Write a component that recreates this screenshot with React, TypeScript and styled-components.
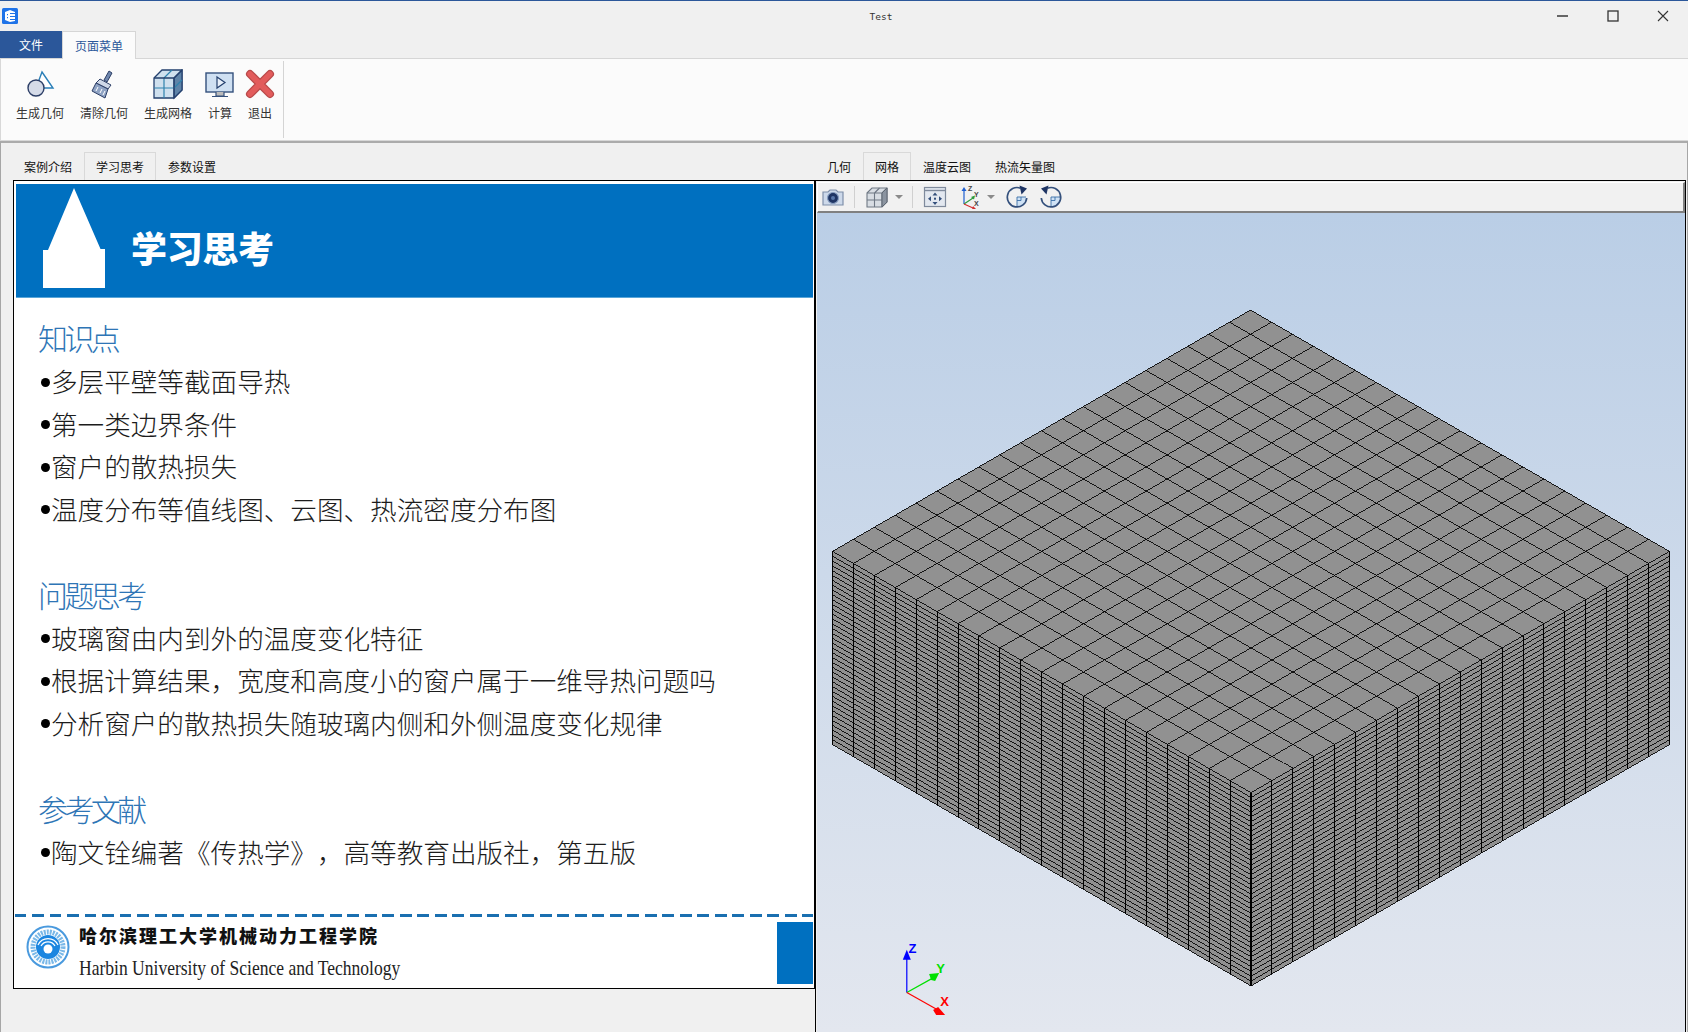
import React from "react";
import styled, { createGlobalStyle } from "styled-components";

const UI = `"Noto Sans CJK SC", "Liberation Sans", sans-serif`;

const Global = createGlobalStyle`
  html, body { margin: 0; padding: 0; background: #f0f0f0; overflow: hidden; }
  * { box-sizing: border-box; }
  #root { width: 1688px; height: 1032px; }
`;

const Page = styled.div`
  width: 1688px;
  height: 1032px;
  display: flex;
  flex-direction: column;
  font-family: ${UI};
  font-size: 12px;
  color: #222;
  background: #f0f0f0;
`;

const TitleBar = styled.header`
  height: 31px;
  flex: none;
  display: flex;
  align-items: center;
  border-top: 1px solid #2b579a;
  padding-bottom: 1px;
`;
const AppIcon = styled.svg`
  width: 16px;
  height: 16px;
  margin-left: 2px;
  margin-right: 2px;
  flex: none;
`;
const Title = styled.div`
  flex: 1;
  text-align: center;
  padding: 2px 0 0 204px;
  font-family: "DejaVu Sans Mono", monospace;
  font-size: 9.5px;
  color: #333;
`;
const WinButton = styled.div`
  width: 50px;
  height: 30px;
  display: flex;
  align-items: center;
  justify-content: center;
`;

const RibbonTabs = styled.nav`
  height: 27px;
  flex: none;
  display: flex;
`;
const FileTab = styled.div`
  width: 62px;
  background: #2b579a;
  color: #fff;
  display: flex;
  align-items: center;
  justify-content: center;
`;
const MenuTab = styled.div`
  width: 74px;
  background: #fbfbfb;
  color: #2b579a;
  border: 1px solid #d6d6d6;
  border-bottom: none;
  display: flex;
  align-items: center;
  justify-content: center;
  height: 28px;
  position: relative;
  z-index: 1;
`;

const Ribbon = styled.section`
  height: 83px;
  flex: none;
  background: #fbfbfb;
  border-top: 1px solid #d6d6d6;
  border-bottom: 1px solid #d8d8d8;
  border-left: 1px solid #d8d8d8;
  display: flex;
  padding: 2px 0 2px 7px;
`;
const RibbonGroup = styled.div`
  width: 276px;
  border-right: 1px solid #d4d4d4;
  display: flex;
  align-items: flex-start;
`;
const RibbonItem = styled.div`
  padding: 8px 8px 0;
  display: flex;
  flex-direction: column;
  align-items: center;
  gap: 3px;
  color: #333;
  line-height: 17px;
  white-space: nowrap;
`;
const RibbonIcon = styled.svg`
  width: 32px;
  height: 32px;
  margin: 0 -4px;
  display: block;
`;

const Workspace = styled.main`
  flex: 1;
  min-height: 0;
  display: grid;
  grid-template-columns: 814px 1fr;
  border-top: 2px solid #ababab;
  border-left: 1px solid #a6a6a6;
  border-right: 1px solid #a6a6a6;
  padding-top: 9px;
`;
const LeftColumn = styled.div`
  padding-left: 12px;
  display: flex;
  flex-direction: column;
`;
const RightColumn = styled.div`
  display: flex;
  flex-direction: column;
  min-height: 0;
`;
const TabRow = styled.div<{ $inset?: number }>`
  height: 28px;
  flex: none;
  display: flex;
  margin-left: ${(p) => p.$inset ?? 0}px;
`;
const Tab = styled.div<{ $active?: boolean }>`
  padding: 0 11px 1px;
  display: flex;
  align-items: center;
  color: #111;
  white-space: nowrap;
  border: 1px solid ${(p) => (p.$active ? "#d9d9d9" : "transparent")};
  border-bottom: none;
`;

const SlideFrame = styled.div`
  width: 802px;
  height: 809px;
  border: 1px solid #000;
  background: #fff;
  padding: 3px 1px 4px 2px;
`;
const Slide = styled.article`
  height: 100%;
  display: flex;
  flex-direction: column;
`;
const SlideHeader = styled.div`
  height: 114px;
  flex: none;
  background: #0070c0;
  border-bottom: 1px solid #5aa6d8;
  display: flex;
  align-items: center;
`;
const House = styled.svg`
  width: 62px;
  height: 100px;
  margin: -5px 0 0 27px;
  flex: none;
`;
const SlideTitle = styled.h1`
  margin: 13px 0 0 26px;
  font-size: 36px;
  line-height: 44px;
  font-weight: 900;
  color: #fff;
  letter-spacing: -0.3px;
`;
const SlideBody = styled.div`
  flex: 1;
  padding: 19px 0 0 23px;
  display: flex;
  flex-direction: column;
  gap: 44px;
`;
const Block = styled.section``;
const BlockHeading = styled.h2`
  margin: 0 0 0 -1px;
  padding-bottom: 2px;
  font-size: 30px;
  letter-spacing: -3.6px;
  line-height: 40.5px;
  font-weight: 300;
  color: #2e75b6;
`;
const Bullets = styled.ul`
  margin: 0;
  padding: 0;
  list-style: none;
`;
const Bullet = styled.li`
  display: flex;
  align-items: center;
  height: 42.5px;
  font-size: 26.6px;
  font-weight: 300;
  color: #1c1c1c;
  white-space: nowrap;
  text-spacing-trim: space-all;
  &::before {
    content: "";
    width: 9px;
    height: 9px;
    border-radius: 50%;
    background: #000;
    margin: 3px 1px 0 2px;
    flex: none;
  }
`;
const SlideFooter = styled.footer`
  height: 70px;
  flex: none;
  display: flex;
  align-items: flex-start;
  position: relative;
  padding-top: 8px;
  margin-left: -1px;
  background: repeating-linear-gradient(90deg, #1a6fb0 0 11.5px, transparent 11.5px 17.5px) top left / 100% 3px no-repeat;
`;
const Logo = styled.svg`
  width: 44px;
  height: 44px;
  margin: 3px 0 0 11px;
  flex: none;
`;
const FooterText = styled.div`
  margin-left: 9px;
  flex: 1;
  white-space: nowrap;
`;
const SchoolName = styled.div`
  font-size: 18px;
  font-weight: 900;
  line-height: 26px;
  letter-spacing: 2px;
  color: #111;
`;
const SchoolEnglish = styled.div`
  font-family: "Liberation Serif", serif;
  font-size: 21px;
  line-height: 28px;
  margin-top: 6px;
  color: #222;
  transform: scaleX(0.835);
  transform-origin: left center;
`;
const FooterBox = styled.div`
  width: 36px;
  height: 62px;
  flex: none;
  background: #0070c0;
`;

const ViewFrame = styled.div`
  flex: 1;
  min-height: 0;
  border: 1px solid #000;
  border-bottom: none;
  margin-right: 1px;
  padding: 1px 0 0 1px;
  display: flex;
  flex-direction: column;
`;
const Toolbar = styled.div`
  height: 31px;
  flex: none;
  display: flex;
  align-items: center;
  background: #f1f1f1;
  border-top: 1px solid #fff;
  border-left: 1px solid #fff;
  border-right: 2px solid #808080;
  border-bottom: 2px solid #808080;
  padding-left: 3px;
`;
const ToolIcon = styled.svg<{ $gap?: number }>`
  width: 24px;
  height: 24px;
  flex: none;
  display: block;
  margin-left: ${(p) => p.$gap ?? 0}px;
`;
const ToolSep = styled.div`
  width: 1px;
  height: 22px;
  background: #d0d0d0;
  margin: 0 10px 0 9px;
  flex: none;
`;
const Caret = styled.div<{ $gap?: number }>`
  width: 0;
  height: 0;
  border-left: 4px solid transparent;
  border-right: 4px solid transparent;
  border-top: 4px solid #8a8a8a;
  margin-left: ${(p) => p.$gap ?? 6}px;
  flex: none;
`;
const Viewport = styled.div`
  flex: 1;
  min-height: 0;
  position: relative;
  background: linear-gradient(180deg, #bacee6 0%, #e3e7ef 100%);
`;
const Scene = styled.svg`
  position: absolute;
  inset: 0;
  width: 100%;
  height: 100%;
  display: block;
`;
const AxisLabel = styled.text`
  font-family: "Liberation Sans", sans-serif;
  font-size: 13px;
  font-weight: 700;
`;
const AxisMini = styled.text`
  font-family: "Liberation Sans", sans-serif;
  font-size: 7px;
  font-weight: 700;
  fill: #444;
`;

const T = { x: 1250, y: 310 };
const L = { x: 832.5, y: 551 };
const F = { x: 1250.5, y: 792 };
const R = { x: 1668.5, y: 551 };
const H = 193;
const N = 20;
const LAYERS = 40;
type Pt = { x: number; y: number };
const lerp = (a: Pt, b: Pt, t: number): Pt => ({
  x: a.x + (b.x - a.x) * t,
  y: a.y + (b.y - a.y) * t,
});
const seg = (a: Pt, b: Pt) => `M${a.x.toFixed(1)} ${a.y.toFixed(1)}L${b.x.toFixed(1)} ${b.y.toFixed(1)}`;

function MeshLines() {
  const diagonals: string[] = [];
  const verticals: string[] = [];
  for (let i = 0; i <= N; i++) {
    const t = i / N;
    diagonals.push(seg(lerp(T, L, t), lerp(R, F, t)));
    diagonals.push(seg(lerp(T, R, t), lerp(L, F, t)));
    const a = lerp(L, F, t);
    verticals.push(seg(a, { x: a.x, y: a.y + H }));
    const b = lerp(R, F, t);
    verticals.push(seg(b, { x: b.x, y: b.y + H }));
  }
  for (let k = 1; k <= LAYERS; k++) {
    const d = (H * k) / LAYERS;
    diagonals.push(seg({ x: L.x, y: L.y + d }, { x: F.x, y: F.y + d }));
    diagonals.push(seg({ x: R.x, y: R.y + d }, { x: F.x, y: F.y + d }));
  }
  return (
    <>
      <path d={diagonals.join("")} fill="none" stroke="#000" strokeWidth={0.86} shapeRendering="crispEdges" />
      <path d={verticals.join("")} fill="none" stroke="#000" strokeWidth={1} shapeRendering="crispEdges" />
    </>
  );
}

function Axes() {
  return (
    <g>
      <path d="M906.7 991.7V956" stroke="#0000ff" strokeWidth={1.2} />
      <path d="M906.7 949l4 10h-8z" fill="#0000ff" />
      <AxisLabel x={908.5} y={952} fill="#0000ff">Z</AxisLabel>
      <path d="M906.7 991.7L933 977" stroke="#00e000" strokeWidth={1.2} />
      <path d="M939 972l-4 8-4-1-2-6z" fill="#00e000" />
      <AxisLabel x={936} y={972} fill="#00e000">Y</AxisLabel>
      <path d="M906.7 991.7L936 1008" stroke="#ff0000" strokeWidth={1.2} />
      <path d="M945 1014h-9l-3-5 5-3z" fill="#ff0000" />
      <AxisLabel x={940} y={1005} fill="#ff0000">X</AxisLabel>
    </g>
  );
}

const leftTabs = ["案例介绍", "学习思考", "参数设置"];
const rightTabs = ["几何", "网格", "温度云图", "热流矢量图"];

const sections = [
  { h: "知识点", items: ["多层平壁等截面导热", "第一类边界条件", "窗户的散热损失", "温度分布等值线图、云图、热流密度分布图"] },
  { h: "问题思考", items: ["玻璃窗由内到外的温度变化特征", "根据计算结果，宽度和高度小的窗户属于一维导热问题吗", "分析窗户的散热损失随玻璃内侧和外侧温度变化规律"] },
  { h: "参考文献", items: ["陶文铨编著《传热学》，高等教育出版社，第五版"] },
];

const ribbonIcons: Record<string, React.ReactNode> = {
  geo: (
    <>
      <path d="M18 3l11 16H12z" fill="#fff" stroke="#2a7fb8" strokeWidth={1.4} />
      <circle cx="12" cy="19" r="8" fill="#d5dbe8" stroke="#2c3e66" strokeWidth={1.4} />
    </>
  ),
  clear: (
    <>
      <path d="M21 2l3 2-5 9-3-2z" fill="#6f87ad" stroke="#2c3e66" strokeWidth={1} />
      <path d="M12 10l11 6-3 4-12-6z" fill="#cfd8e8" stroke="#2c3e66" strokeWidth={1} />
      <path d="M8 14l12 6-3 9-13-7z" fill="#8fa3c4" stroke="#2c3e66" strokeWidth={1} />
      <path d="M8 22l2-4M12 24l2-4M15 26l2-4" stroke="#fff" strokeWidth={1} />
    </>
  ),
  mesh: (
    <>
      <path d="M2 9l8-8h20v20l-8 8H2z" fill="#cfe0ee" stroke="#24406e" strokeWidth={1.3} />
      <path d="M22 29l8-8V1l-8 8z" fill="#5e83a8" stroke="#24406e" strokeWidth={1.2} />
      <path d="M2 19h20M12 9v20M22 19l8-8M12 9l8-8" fill="none" stroke="#2f82ad" strokeWidth={1.2} />
      <path d="M2 9h20v20M22 9l8-8" fill="none" stroke="#24406e" strokeWidth={1.3} />
    </>
  ),
  calc: (
    <>
      <rect x="2" y="4" width="27" height="19" fill="#cfe0f2" stroke="#34507c" strokeWidth={1.4} />
      <path d="M13 8l8 5.500-8 5.500z" fill="#e8f0fa" stroke="#24406e" strokeWidth={1.2} />
      <path d="M12 23v4h8v-4M8 27.500h16" fill="#bbb" stroke="#34507c" strokeWidth={1.2} />
    </>
  ),
  exit: (
    <>
      <path d="M6 5l20 20M26 5L6 25" stroke="#b84a4a" strokeWidth={8} strokeLinecap="round" />
      <path d="M6 5l20 20M26 5L6 25" stroke="#e25c5c" strokeWidth={5.5} strokeLinecap="round" />
    </>
  ),
};

const ribbonItems = [
  { label: "生成几何", icon: "geo" },
  { label: "清除几何", icon: "clear" },
  { label: "生成网格", icon: "mesh" },
  { label: "计算", icon: "calc" },
  { label: "退出", icon: "exit" },
];

const Quadrant = () => (
  <>
    <path d="M12 12h9v1a9 9 0 0 1-9 9z" fill="#cfe2f5" />
    <path d="M12 12v9M12 12h9M16 12v3.500h-4" stroke="#3a6fa8" strokeWidth="0.9" fill="none" />
  </>
);

export default function App() {
  return (
    <Page>
      <Global />
      <TitleBar>
        <AppIcon viewBox="0 0 16 16">
          <rect width="16" height="16" rx="1.500" fill="#1f73e8" />
          <path d="M3 4l5-2 5 2v1H8v1h5v2H8v1h5v2H8v1h5v1l-5 1-5-2zM5 6v1l1 .5V6zm0 3v1l1 .5V9z" fill="#fff" />
        </AppIcon>
        <Title>Test</Title>
        <WinButton>
          <svg width="12" height="12" viewBox="0 0 12 12"><path d="M0 6h11" stroke="#666" strokeWidth="2" /></svg>
        </WinButton>
        <WinButton>
          <svg width="12" height="12" viewBox="0 0 12 12"><rect x="1" y="1" width="10" height="10" fill="none" stroke="#333" strokeWidth="1.300" /></svg>
        </WinButton>
        <WinButton>
          <svg width="12" height="12" viewBox="0 0 12 12"><path d="M1 1l10 10M11 1L1 11" stroke="#333" strokeWidth="1.100" /></svg>
        </WinButton>
      </TitleBar>

      <RibbonTabs>
        <FileTab>文件</FileTab>
        <MenuTab>页面菜单</MenuTab>
      </RibbonTabs>

      <Ribbon>
        <RibbonGroup>
          {ribbonItems.map((it) => (
            <RibbonItem key={it.label}>
              <RibbonIcon viewBox="0 0 32 32">{ribbonIcons[it.icon]}</RibbonIcon>
              {it.label}
            </RibbonItem>
          ))}
        </RibbonGroup>
      </Ribbon>

      <Workspace>
        <LeftColumn>
          <TabRow $inset={-1}>
            {leftTabs.map((t, i) => (
              <Tab key={t} $active={i === 1}>{t}</Tab>
            ))}
          </TabRow>
          <SlideFrame>
            <Slide>
              <SlideHeader>
                <House viewBox="0 0 62 100">
                  <path d="M31 0L57.500 61H62V100H0V62H5z" fill="#fff" />
                </House>
                <SlideTitle>学习思考</SlideTitle>
              </SlideHeader>
              <SlideBody>
                {sections.map((s) => (
                  <Block key={s.h}>
                    <BlockHeading>{s.h}</BlockHeading>
                    <Bullets>
                      {s.items.map((it) => (
                        <Bullet key={it}>{it}</Bullet>
                      ))}
                    </Bullets>
                  </Block>
                ))}
              </SlideBody>
              <SlideFooter>
                <Logo viewBox="0 0 44 44">
                  <circle cx="22" cy="22" r="20.500" fill="#fff" stroke="#4a9ade" strokeWidth="2" />
                  <circle cx="22" cy="22" r="15" fill="#fff" stroke="#7ab8e8" strokeWidth="5" strokeDasharray="2 1" />
                  <circle cx="22" cy="22" r="12" fill="#1c86e0" />
                  <path d="M12 20a11 11 0 0 1 20 0M15 21a8 8 0 0 1 14 0" fill="none" stroke="#fff" strokeWidth="1.200" />
                  <circle cx="22" cy="24" r="4.500" fill="#fff" />
                </Logo>
                <FooterText>
                  <SchoolName>哈尔滨理工大学机械动力工程学院</SchoolName>
                  <SchoolEnglish>Harbin University of Science and Technology</SchoolEnglish>
                </FooterText>
                <FooterBox />
              </SlideFooter>
            </Slide>
          </SlideFrame>
        </LeftColumn>

        <RightColumn>
          <TabRow>
            {rightTabs.map((t, i) => (
              <Tab key={t} $active={i === 1}>{t}</Tab>
            ))}
          </TabRow>
          <ViewFrame>
            <Toolbar>
              <ToolIcon viewBox="0 0 24 24">
                <path d="M2 7h5l2-2h6l2 2h5v13H2z" fill="#cdd9ea" stroke="#7f8faa" strokeWidth="1.200" />
                <circle cx="12" cy="13" r="5.500" fill="#1f3564" stroke="#8aa0c2" strokeWidth="1.200" />
                <circle cx="12" cy="13" r="2" fill="#5a78aa" />
              </ToolIcon>
              <ToolSep />
              <ToolIcon viewBox="0 0 24 24">
                <path d="M2 8l5-5h15v14l-5 5H2z" fill="#d8dde3" stroke="#6f7884" strokeWidth="1.100" />
                <path d="M2 8h15v14M17 8l5-5M2 15h15M9.500 8v14M9.500 8l5-5" fill="none" stroke="#6f7884" strokeWidth="1.100" />
                <path d="M17 22l5-5V3l-5 5z" fill="#8b94a0" stroke="#5e6772" strokeWidth="1" />
              </ToolIcon>
              <Caret />
              <ToolSep />
              <ToolIcon viewBox="0 0 24 24">
                <rect x="1.500" y="2.500" width="21" height="19" fill="#e3e8f0" stroke="#7f8a9c" strokeWidth="1.200" />
                <path d="M1.500 5.500h21" stroke="#7f8a9c" strokeWidth="1.400" />
                <path d="M12 7.500l2.500 3h-5zM12 20l2.500-3h-5zM5 13.700l3-2.500v5zM19 13.700l-3-2.500v5z" fill="#34507c" />
                <rect x="11" y="12.700" width="2" height="2" fill="#34507c" />
              </ToolIcon>
              <ToolIcon $gap={12} viewBox="0 0 24 24">
                <path d="M5 6v13" stroke="#1f5fd0" strokeWidth="1.200" />
                <path d="M5 2l2.500 4h-5z" fill="#1f5fd0" />
                <path d="M5 19l9-6" stroke="#2a9a3a" strokeWidth="1.200" />
                <path d="M16 10.500l-1 4-3-2.500z" fill="#2a9a3a" />
                <path d="M5 19l9 4" stroke="#d23030" strokeWidth="1.200" />
                <path d="M17 24l-4 .5 1-3.500z" fill="#d23030" />
                <AxisMini x={9} y={6}>Z</AxisMini>
                <AxisMini x={15} y={12}>Y</AxisMini>
                <AxisMini x={15} y={21}>X</AxisMini>
              </ToolIcon>
              <Caret $gap={4} />
              <ToolIcon $gap={10} viewBox="0 0 24 24">
                <Quadrant />
                <path d="M21.700 13A9.700 9.700 0 1 1 15.500 3.200" fill="none" stroke="#34507c" strokeWidth="1.700" />
                <path d="M14.500 .5L22 3.500l-5.500 6z" fill="#1f3564" />
              </ToolIcon>
              <ToolIcon $gap={10} viewBox="0 0 24 24">
                <Quadrant />
                <g transform="matrix(-1 0 0 1 24 0)">
                  <path d="M21.700 13A9.700 9.700 0 1 1 15.500 3.200" fill="none" stroke="#34507c" strokeWidth="1.700" />
                  <path d="M14.500 .5L22 3.500l-5.500 6z" fill="#1f3564" />
                </g>
              </ToolIcon>
            </Toolbar>
            <Viewport>
              <Scene viewBox="817 213 867 819" preserveAspectRatio="xMinYMin slice">
                <polygon points={`${T.x},${T.y} ${R.x},${R.y} ${F.x},${F.y} ${L.x},${L.y}`} fill="#919191" />
                <polygon points={`${L.x},${L.y} ${F.x},${F.y} ${F.x},${F.y + H} ${L.x},${L.y + H}`} fill="#909090" />
                <polygon points={`${R.x},${R.y} ${F.x},${F.y} ${F.x},${F.y + H} ${R.x},${R.y + H}`} fill="#909090" />
                <MeshLines />
                <Axes />
              </Scene>
            </Viewport>
          </ViewFrame>
        </RightColumn>
      </Workspace>
    </Page>
  );
}
